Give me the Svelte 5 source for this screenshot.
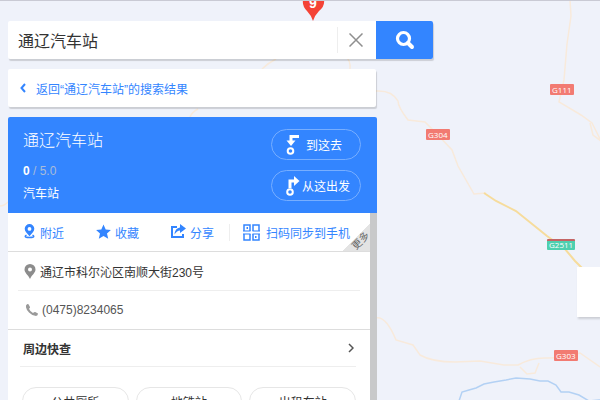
<script lang="ts">
	interface Place {
		name: string;
		score: string;
		total: string;
		category: string;
		address: string;
		phone: string;
	}

	const place: Place = {
		name: '通辽汽车站',
		score: '0',
		total: '5.0',
		category: '汽车站',
		address: '通辽市科尔沁区南顺大街230号',
		phone: '(0475)8234065'
	};

	const nearby = ['公共厕所', '地铁站', '出租车站'];

	let keyword = $state(place.name);
</script>

<main class="map-page">
	<svg class="map" width="1200" height="800" viewBox="0 0 1200 800" fill="none" aria-hidden="true">
		<g stroke="#f8eadb" stroke-width="1.5">
			<path d="M570 0l1 16-4 28-3 36-5 22 22 13 11 8 8 16M590 123l3 12 8 6" />
			<path d="M262 69q6-6 14-10M345 55q6 6 5 14M376 91q16-1 22 10 0 6 10 19l17 2 12 12 15 16 6 16 16 28 12-1" />
			<path d="M376 318q10-2 20 22l17 5 7 10q12 7 35 7l25-1 24 4 14 0q14-8 30-7 16 0 32-5l20 14M520 367l7 7 8-1 4-10" />
			<path d="M0 206q4 0 8-4M190 117q2-5 8-8" />
		</g>
		<path d="M484 193l12 8 20 10 31 25 18 13 10 12 10 10" stroke="#f6dc9c" stroke-width="2" />
		<path
			d="M459 401l3-9 7-2 7-2 8-4 10-2 12-2 10-2 14 1 10 2 8 0 8 4 5 7 8 0 10 3 10 6 10-1 12 0"
			stroke="#b3d1f4"
			stroke-width="1.5"
		/>
		<path d="M303 0h21q1 6-5 11-4 4-6 10-2-6-6-10-5-5-4-11z" fill="#f44336" />
		<text x="313" y="8" class="pin-text">9</text>
	</svg>
	<span class="road g111">G111</span>
	<span class="road g304">G304</span>
	<span class="road g2511">G2511</span>
	<span class="road g303">G303</span>
	<div class="tool-card"></div>

	<div class="sidebar">
		<form class="search" onsubmit={(e) => e.preventDefault()}>
			<input class="search-input" bind:value={keyword} aria-label="搜索" />
			<button class="clear" type="button" aria-label="清空" onclick={() => (keyword = '')}>
				<svg width="14" height="14" viewBox="0 0 14 14" fill="none" stroke="#8f8f8f" stroke-width="1.5">
					<path d="M.5.5l13 13M13.5.5l-13 13" />
				</svg>
			</button>
			<button class="submit" aria-label="搜索">
				<svg width="20" height="20" viewBox="0 0 20 20" fill="none" stroke="#fff">
					<circle cx="8.5" cy="8.5" r="6" stroke-width="3.2" />
					<path d="M13 13l4 4" stroke-width="4" stroke-linecap="round" />
				</svg>
			</button>
		</form>

		<a class="back" href="#results">
			<svg width="6" height="10" viewBox="0 0 6 10" fill="none" stroke="#3385ff" stroke-width="2">
				<path d="M5 1L1.5 5 5 9" />
			</svg>
			返回“{place.name}”的搜索结果
		</a>

		<section class="panel">
			<header class="head">
				<div class="info">
					<h1>{place.name}</h1>
					<p class="rating"><b>{place.score}</b> / {place.total}</p>
					<p class="category">{place.category}</p>
				</div>
				<div class="routes">
					<button class="route">
						<svg width="14" height="20" viewBox="0 0 14 20" fill="none" stroke="#fff">
							<path d="M13 1.500H5V6" stroke-width="3" />
							<path d="M.5 5.500h9L5 11z" fill="#fff" stroke="none" />
							<circle cx="4.500" cy="16" r="2.800" stroke-width="2" />
						</svg>
						<span>到这去</span>
					</button>
					<button class="route start">
						<svg width="14" height="20" viewBox="0 0 14 20" fill="none" stroke="#fff">
							<path d="M4 12V5H9" stroke-width="3" />
							<path d="M8 0l5.500 5L8 10z" fill="#fff" stroke="none" />
							<circle cx="4" cy="16" r="2.800" stroke-width="2" />
						</svg>
						<span>从这出发</span>
					</button>
				</div>
			</header>

			<div class="scroll">
				<div class="actions">
					<button class="action">
						<svg width="15" height="16" viewBox="0 0 15 16" fill="#3385ff">
							<path
								fill-rule="evenodd"
								d="M8.500 0a4.800 4.800 0 0 1 4.800 4.800c0 2.700-2.600 4.500-4.800 7.400-2.200-2.900-4.800-4.700-4.800-7.400A4.800 4.800 0 0 1 8.500 0zm0 3a1.900 1.900 0 1 0 0 3.800 1.900 1.900 0 0 0 0-3.800z"
							/>
							<path d="M5.500 11c-3 2 0 2.500 3 2.500s6-.5 3-2.500" fill="none" stroke="#3385ff" stroke-width="1.500" />
						</svg>
						附近
					</button>
					<button class="action">
						<svg width="15" height="16" viewBox="0 0 15 16" fill="#3385ff">
							<path d="M7.500.5l2.200 4.900 5.200.6-3.900 3.500 1.200 5.200-4.700-2.800-4.700 2.800L4 9.500.1 6l5.200-.6z" />
						</svg>
						收藏
					</button>
					<button class="action">
						<svg width="15" height="16" viewBox="0 0 15 16">
							<path d="M6 3H1v10h11v-3" fill="none" stroke="#3385ff" stroke-width="2" />
							<path d="M9 0l6 4.500L9 9V6.500Q6 6.500 3.500 10.500 4 4 9 3.500z" fill="#3385ff" />
						</svg>
						分享
					</button>
					<button class="action sync">
						<svg width="17" height="17" viewBox="0 0 17 17" fill="none" stroke="#3385ff" stroke-width="1.500">
							<path d="M1 7V1h6v6M10 7V1h6v6M1 10v6h6v-6M10 10v6h6v-6" />
							<path d="M0 7h7.500M9.500 7H17M0 10h7.500M9.500 10H17" opacity="0.7" />
							<path d="M3.500 4H5M12 13H13.500" stroke-width="2" />
						</svg>
						扫码同步到手机
					</button>
					<button class="more"><span>更多</span></button>
				</div>

				<p class="row">
					<svg width="12" height="15" viewBox="0 0 12 15" fill="#8c8c8c">
						<path
							fill-rule="evenodd"
							d="M6 0a5.500 5.500 0 0 1 5.500 5.500C11.500 9 8 10.500 6 15 4 10.500.5 9 .5 5.500A5.500 5.500 0 0 1 6 0zm0 3.500a2 2 0 1 0 0 4 2 2 0 0 0 0-4z"
						/>
					</svg>
					{place.address}
				</p>
				<p class="row phone">
					<svg width="12" height="12" viewBox="0 0 12 12" fill="#9a9a9a">
						<path
							d="M0 1.500Q1.500-.5 2.500.3L4 3q.3.700-1 1.700 1 2.700 4 4.300 1.500-1.300 2.200-1L12 9.500q0 2-2 2.500Q6.500 12 3 8.500T0 1.500z"
						/>
					</svg>
					{place.phone}
				</p>

				<section class="quick">
					<a class="quick-title" href="#nearby">
						周边快查
						<svg width="6" height="10" viewBox="0 0 6 10" fill="none" stroke="#555" stroke-width="1.500">
							<path d="M1 1l4 4-4 4" />
						</svg>
					</a>
					<div class="chips">
						{#each nearby as item}
							<button class="chip">{item}</button>
						{/each}
					</div>
				</section>
			</div>
		</section>
	</div>
</main>

<style>
	:global(body) {
		margin: 0;
	}

	.map-page {
		position: relative;
		box-sizing: border-box;
		height: 100vh;
		overflow: hidden;
		padding: 20px 8px 0;
		border-top: 1px solid #c9cad4;
		background: #eff2fa;
		font-family: 'Liberation Sans', 'Noto Sans CJK SC', sans-serif;
		font-size: 12px;
		color: #333;
	}

	.map {
		position: absolute;
		top: -1px;
		left: 0;
	}

	.pin-text {
		font-size: 14px;
		font-weight: bold;
		text-anchor: middle;
		fill: #fff;
	}

	/* map labels */
	.road {
		position: absolute;
		padding: 0 2px;
		border-radius: 1px;
		background: #f27b72;
		font-family: 'Open Sans', sans-serif;
		font-size: 8px;
		line-height: 11px;
		color: #fff;
	}

	.g111 {
		top: 83px;
		left: 550px;
	}

	.g304 {
		top: 128px;
		left: 426px;
	}

	.g2511 {
		top: 238px;
		left: 547px;
		box-sizing: border-box;
		height: 11px;
		border-top: 2px solid #c46565;
		background: #4ed0af;
		line-height: 8px;
	}

	.g303 {
		top: 349px;
		left: 554px;
	}

	.tool-card {
		position: absolute;
		top: 266px;
		right: 0;
		width: 23px;
		height: 50px;
		background: #fff;
		box-shadow: 1px 2px 2px rgba(0, 0, 0, 0.15);
	}

	button {
		padding: 0;
		border: 0;
		background: none;
		font: inherit;
		color: inherit;
		cursor: pointer;
	}

	a {
		text-decoration: none;
	}

	p,
	h1 {
		margin: 0;
	}

	.sidebar {
		position: relative;
		display: flex;
		flex-direction: column;
		gap: 10px;
		max-width: 425px;
	}

	.search {
		display: flex;
		height: 38px;
		border-radius: 2px;
		background: #fff;
		box-shadow: 1px 2px 1px rgba(0, 0, 0, 0.15);
	}

	.search-input {
		flex: 1;
		min-width: 0;
		padding: 0 10px;
		border: 0;
		outline: none;
		background: none;
		font: inherit;
		font-size: 16px;
		color: #333;
	}

	.clear {
		display: grid;
		place-items: center;
		width: 39px;
		margin: 6px 0;
		padding-right: 2px;
		border-left: 1px solid #eee;
	}

	.submit {
		display: grid;
		place-items: center;
		width: 57px;
		border-radius: 0 2px 2px 0;
		background: #3385ff;
	}

	.back {
		display: flex;
		align-items: center;
		gap: 10px;
		height: 38px;
		margin-right: 57px;
		padding-left: 12px;
		border-radius: 2px;
		background: #fff;
		box-shadow: 1px 2px 1px rgba(0, 0, 0, 0.15);
		color: #3385ff;
	}

	.panel {
		margin-right: 56px;
		border-radius: 2px;
		overflow: hidden;
		background: #fff;
	}

	.head {
		display: flex;
		justify-content: space-between;
		padding: 12px 16px 10px 15px;
		background: #3385ff;
		color: #fff;
	}

	h1 {
		margin-bottom: 8px;
		font-size: 16px;
		font-weight: 300;
		line-height: 24px;
	}

	.rating {
		margin-bottom: 4px;
		line-height: 20px;
		color: #a9bcd9;
	}

	.rating b {
		color: #fff;
	}

	.category {
		line-height: 18px;
	}

	.routes {
		display: flex;
		flex-direction: column;
		gap: 10px;
	}

	.route {
		display: flex;
		align-items: center;
		gap: 6px;
		box-sizing: border-box;
		width: 90px;
		height: 31px;
		padding-left: 14px;
		border: 1px solid #77aeff;
		border-radius: 16px;
	}

	.start {
		gap: 2px;
	}

	.scroll {
		border-right: 7px solid #c8c9ca;
	}

	.actions {
		position: relative;
		display: grid;
		grid-template-columns: 75px 75px 58px 1fr;
		align-items: center;
		height: 38px;
		padding-left: 13px;
		border-bottom: 1px solid #ddd;
		color: #3385ff;
	}

	.action {
		display: flex;
		align-items: center;
		gap: 4px;
		white-space: nowrap;
	}

	.sync {
		gap: 6px;
		padding-left: 13px;
		border-left: 1px solid #eee;
	}

	.more {
		position: absolute;
		right: 0;
		bottom: 0;
		width: 28px;
		height: 28px;
		background: linear-gradient(135deg, transparent 50%, #e3e3e3 50%);
		font-size: 10px;
		color: #666;
	}

	.more span {
		position: absolute;
		right: -1px;
		bottom: 4px;
		line-height: 12px;
		white-space: nowrap;
		transform: rotate(-45deg);
	}

	.row {
		display: flex;
		align-items: center;
		gap: 4px;
		height: 38px;
		margin: 0 10px;
		padding-left: 6px;
		border-bottom: 1px solid #eee;
	}

	.phone {
		margin: 0;
		padding-left: 18px;
		border-color: #ddd;
		color: #555;
	}

	.quick {
		padding: 0 14px 20px 12px;
	}

	.quick-title {
		display: flex;
		align-items: center;
		justify-content: space-between;
		height: 36px;
		padding: 0 2px 0 3px;
		border-bottom: 1px solid #eee;
		font-weight: bold;
		color: #333;
	}

	.chips {
		display: flex;
		gap: 7px;
		padding: 20px 0 0 2px;
	}

	.chip {
		flex: 1;
		height: 28px;
		border: 1px solid #e6e6e6;
		border-radius: 14px;
	}
</style>
